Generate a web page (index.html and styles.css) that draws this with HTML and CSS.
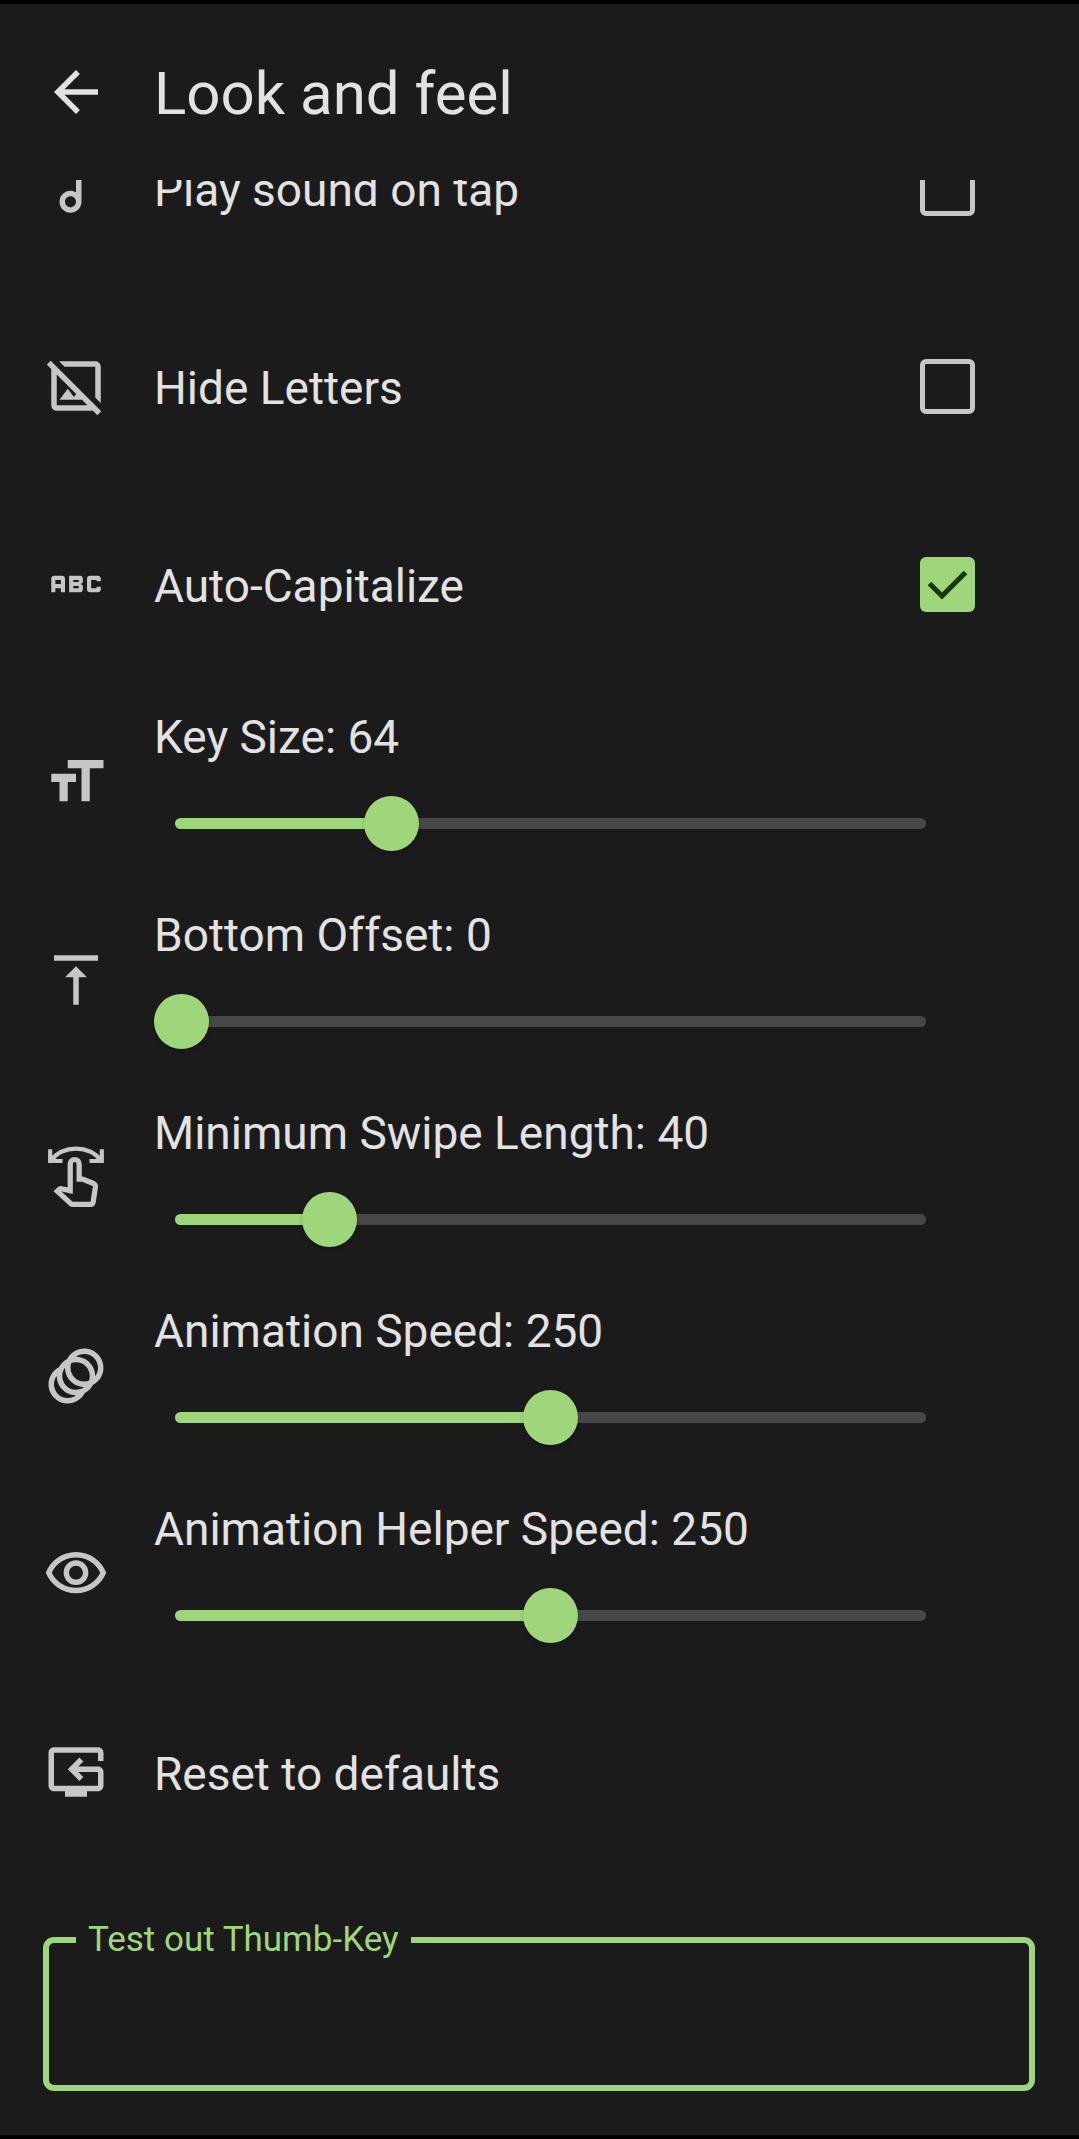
FILE: index.html
```html
<!DOCTYPE html>
<html lang="en">
<head>
  <meta charset="utf-8">
  <meta name="viewport" content="width=device-width, initial-scale=1">
  <title>Look and feel</title>
  <link rel="stylesheet" href="styles.css">
</head>
<body>
  <header class="top-bar">
    <button class="back" type="button" aria-label="Back">
      <svg class="icon" viewBox="0 0 24 24" aria-hidden="true"><path d="M20 11H7.83l5.59-5.59L12 4l-8 8 8 8 1.41-1.41L7.83 13H20z"/></svg>
    </button>
    <h1 class="title">Look and feel</h1>
  </header>

  <main class="content">
    <div class="settings">
      <div class="row">
        <svg class="icon" viewBox="0 0 24 24" aria-hidden="true"><path d="M12 3v10.55c-.59-.34-1.27-.55-2-.55-2.21 0-4 1.79-4 4s1.79 4 4 4 4-1.79 4-4V7h4V3h-6zm-2 16c-1.1 0-2-.9-2-2s.9-2 2-2 2 .9 2 2-.9 2-2 2z"/></svg>
        <label class="label" for="sound">Play sound on tap</label>
        <input class="checkbox" id="sound" type="checkbox">
      </div>
      <div class="row">
        <svg class="icon" viewBox="0 0 24 24" aria-hidden="true"><path d="M19 5v11.17l2 2V5c0-1.1-.9-2-2-2H5.83l2 2H19zM2.81 2.81L1.39 4.22 3 5.83V19c0 1.1.9 2 2 2h13.17l1.61 1.61 1.41-1.41L2.81 2.81zM5 19V7.83l7.07 7.07-.82 1.1L9 13l-3 4h8.17l2 2H5z"/></svg>
        <label class="label" for="hide">Hide Letters</label>
        <input class="checkbox" id="hide" type="checkbox">
      </div>
      <div class="row">
        <svg class="icon" viewBox="0 0 24 24" aria-hidden="true"><path d="M21 11h-1.5v-.5h-2v3h2V13H21v1c0 .55-.45 1-1 1h-3c-.55 0-1-.45-1-1v-4c0-.55.45-1 1-1h3c.55 0 1 .45 1 1v1zM8 10v5H6.5v-1.5h-2V15H3v-5c0-.55.45-1 1-1h3c.55 0 1 .45 1 1zm-1.5.5h-2V12h2v-1.5zm7 1.5c.55 0 1 .45 1 1v1c0 .55-.45 1-1 1h-4V9h4c.55 0 1 .45 1 1v1c0 .55-.45 1-1 1zM11 10.5v.75h2v-.75h-2zm2 2.25h-2v.75h2v-.75z"/></svg>
        <label class="label" for="caps">Auto-Capitalize</label>
        <input class="checkbox" id="caps" type="checkbox" checked>
      </div>

      <div class="row">
        <svg class="icon" viewBox="0 0 24 24" aria-hidden="true"><path d="M9 4v3h5v12h3V7h5V4H9zm-6 8h3v7h3v-7h3V9H3v3z"/></svg>
        <div class="field">
          <label for="size">Key Size: 64</label>
          <div class="slider" style="--value: 28%"><input class="range" id="size" type="range" min="10" max="200" value="64"></div>
        </div>
      </div>
      <div class="row">
        <svg class="icon" viewBox="0 0 24 24" aria-hidden="true"><path d="M8 11h3v10h2V11h3l-4-4-4 4zM4 3v2h16V3H4z"/></svg>
        <div class="field">
          <label for="offset">Bottom Offset: 0</label>
          <div class="slider" style="--value: 0%"><input class="range" id="offset" type="range" min="0" max="200" value="0"></div>
        </div>
      </div>
      <div class="row">
        <svg class="icon icon-line" viewBox="0 0 24 24" aria-hidden="true"><path stroke-width="1.5" d="M2.6 1.5v4.3h4.5M21.4 1.5v4.3h-4.5M2.8 5.6a12 12 0 0 1 18.4 0"/><path stroke-width="1.9" d="M9.9 16.6V6.9a1.62 1.62 0 0 1 3.25 0v5.5h1.2l4 1.6q.8.4.7 1.3l-.8 5.4q-.1.9-1 .9H10.9q-.5 0-.9-.4L5.2 16.8l.5-.5q.4-.5 1-.4z"/></svg>
        <div class="field">
          <label for="swipe">Minimum Swipe Length: 40</label>
          <div class="slider" style="--value: 20%"><input class="range" id="swipe" type="range" min="0" max="200" value="40"></div>
        </div>
      </div>
      <div class="row">
        <svg class="icon" viewBox="0 0 24 24" aria-hidden="true"><path d="M15 2c-2.71 0-5.05 1.54-6.22 3.78-1.28.67-2.34 1.72-3 3C3.54 9.95 2 12.29 2 15c0 3.87 3.13 7 7 7 2.71 0 5.05-1.54 6.22-3.78 1.28-.67 2.34-1.72 3-3C20.46 14.05 22 11.71 22 9c0-3.87-3.13-7-7-7zM9 20c-2.76 0-5-2.24-5-5 0-1.12.37-2.16 1-3 0 3.87 3.13 7 7 7-.84.63-1.88 1-3 1zm3-3c-2.76 0-5-2.24-5-5 0-1.12.37-2.16 1-3 0 3.86 3.13 6.99 7 7-.84.63-1.88 1-3 1zm4.7-3.3c-.53.19-1.1.3-1.7.3-2.76 0-5-2.24-5-5 0-.6.11-1.17.3-1.7.53-.19 1.1-.3 1.7-.3 2.76 0 5 2.24 5 5 0 .6-.11 1.17-.3 1.7zM19 12c0-3.86-3.13-6.99-7-7 .84-.63 1.87-1 3-1 2.76 0 5 2.24 5 5 0 1.12-.37 2.16-1 3z"/></svg>
        <div class="field">
          <label for="speed">Animation Speed: 250</label>
          <div class="slider" style="--value: 50%"><input class="range" id="speed" type="range" min="0" max="500" value="250"></div>
        </div>
      </div>
      <div class="row">
        <svg class="icon" viewBox="0 0 24 24" aria-hidden="true"><path d="M12 6c3.79 0 7.17 2.13 8.82 5.5C19.17 14.87 15.79 17 12 17s-7.17-2.13-8.82-5.5C4.83 8.13 8.21 6 12 6m0-2C7 4 2.73 7.11 1 11.5 2.73 15.89 7 19 12 19s9.27-3.11 11-7.5C21.27 7.11 17 4 12 4zm0 5c1.38 0 2.5 1.12 2.5 2.5S13.38 14 12 14s-2.5-1.12-2.5-2.5S10.62 9 12 9m0-2c-2.48 0-4.5 2.02-4.5 4.5S9.52 16 12 16s4.5-2.02 4.5-4.5S14.48 7 12 7z"/></svg>
        <div class="field">
          <label for="helper">Animation Helper Speed: 250</label>
          <div class="slider" style="--value: 50%"><input class="range" id="helper" type="range" min="0" max="500" value="250"></div>
        </div>
      </div>

      <button class="row" type="button">
        <svg class="icon" viewBox="0 0 24 24" aria-hidden="true"><path d="M22 8V5c0-1.1-.9-2-2-2H4c-1.1 0-2 .9-2 2v12c0 1.1.9 2 2 2h4v2h8v-2h4c1.1 0 2-.9 2-2v-5c0-1.1-.9-2-2-2h-7.17l1.83-1.83-1.42-1.41L9 11l4.24 4.24 1.42-1.41L12.83 12H20v5H4V5h16v3z"/></svg>
        <span class="label">Reset to defaults</span>
      </button>
    </div>

    <fieldset class="outlined">
      <legend class="legend"><label for="test">Test out Thumb-Key</label></legend>
      <input class="text-input" id="test" type="text">
    </fieldset>
  </main>
</body>
</html>
```

FILE: styles.css
```css
:root {
  --background: #1b1b1b;
  --text: #e2e2e2;
  --muted: #c6c6c6;
  --primary: #a0d67b;
  --track: #474747;
}

* {
  box-sizing: border-box;
}

body {
  display: flex;
  flex-direction: column;
  min-height: 100vh;
  margin: 0;
  border-top: 4px solid #000;
  border-bottom: 4px solid #000;
  background: var(--background);
  color: var(--text);
  font-family: Roboto, "Liberation Sans", sans-serif;
  font-size: 46px;
  line-height: 66px;
}

button {
  border: 0;
  background: none;
  color: inherit;
  font: inherit;
  text-align: left;
}

.icon {
  flex: none;
  width: 66px;
  height: 66px;
  fill: var(--muted);
}

.icon-line {
  fill: none;
  stroke: var(--muted);
}

.top-bar {
  display: flex;
  align-items: center;
  gap: 45px;
  height: 176px;
  padding: 0 43px;
}

.back {
  display: flex;
  padding: 0;
}

.back .icon {
  fill: var(--text);
}

.title {
  margin: 0;
  padding-top: 4px;
  font-size: 60px;
  font-weight: 400;
}

.content {
  flex: 1;
  overflow: hidden;
}

/* The list is scrolled so that its first row is partly under the top bar. */
.settings {
  margin-top: -91px;
}

.row {
  display: flex;
  align-items: center;
  gap: 45px;
  width: 100%;
  height: 198px;
  padding: 0 104px 0 43px;
}

.label {
  flex: 1;
  padding-top: 4px;
}

.checkbox {
  appearance: none;
  width: 55px;
  height: 55px;
  margin: 0;
  border: 5px solid var(--muted);
  border-radius: 6px;
}

.checkbox:checked {
  border: 0;
  background: var(--primary) url("data:image/svg+xml,%3Csvg xmlns='http://www.w3.org/2000/svg' viewBox='0 0 55 55'%3E%3Cpath d='M9.5 26.5 22 39 45.5 15.5' fill='none' stroke='%231a3700' stroke-width='5'/%3E%3C/svg%3E");
}

.field {
  display: flex;
  flex: 1;
  flex-direction: column;
  gap: 26px;
  margin-right: 28px;
  padding-bottom: 10px;
}

.slider {
  display: grid;
  align-items: center;
}

.slider::before,
.range {
  grid-area: 1 / 1;
}

.slider::before {
  content: "";
  height: 11px;
  margin: 0 21px;
  border-radius: 6px;
  background: linear-gradient(to right, var(--primary) var(--value), var(--track) var(--value));
}

.range {
  appearance: none;
  z-index: 1;
  width: 100%;
  height: 55px;
  margin: 0;
  background: none;
}

.range::-webkit-slider-thumb {
  appearance: none;
  width: 55px;
  height: 55px;
  border: 0;
  border-radius: 50%;
  background: var(--primary);
  box-shadow: 0 2px 4px rgb(0 0 0 / 20%);
}

.outlined {
  min-width: 0;
  margin: 47px 44px 44px 43px;
  padding: 0 27px;
  border: 6px solid var(--primary);
  border-radius: 11px;
}

.legend {
  padding: 0 12px;
  color: var(--primary);
  font-size: 35px;
  line-height: 44px;
}

.text-input {
  display: block;
  width: 100%;
  height: 123px;
  padding: 0 12px;
  border: 0;
  outline: 0;
  background: none;
  color: var(--text);
  font: inherit;
}
```
